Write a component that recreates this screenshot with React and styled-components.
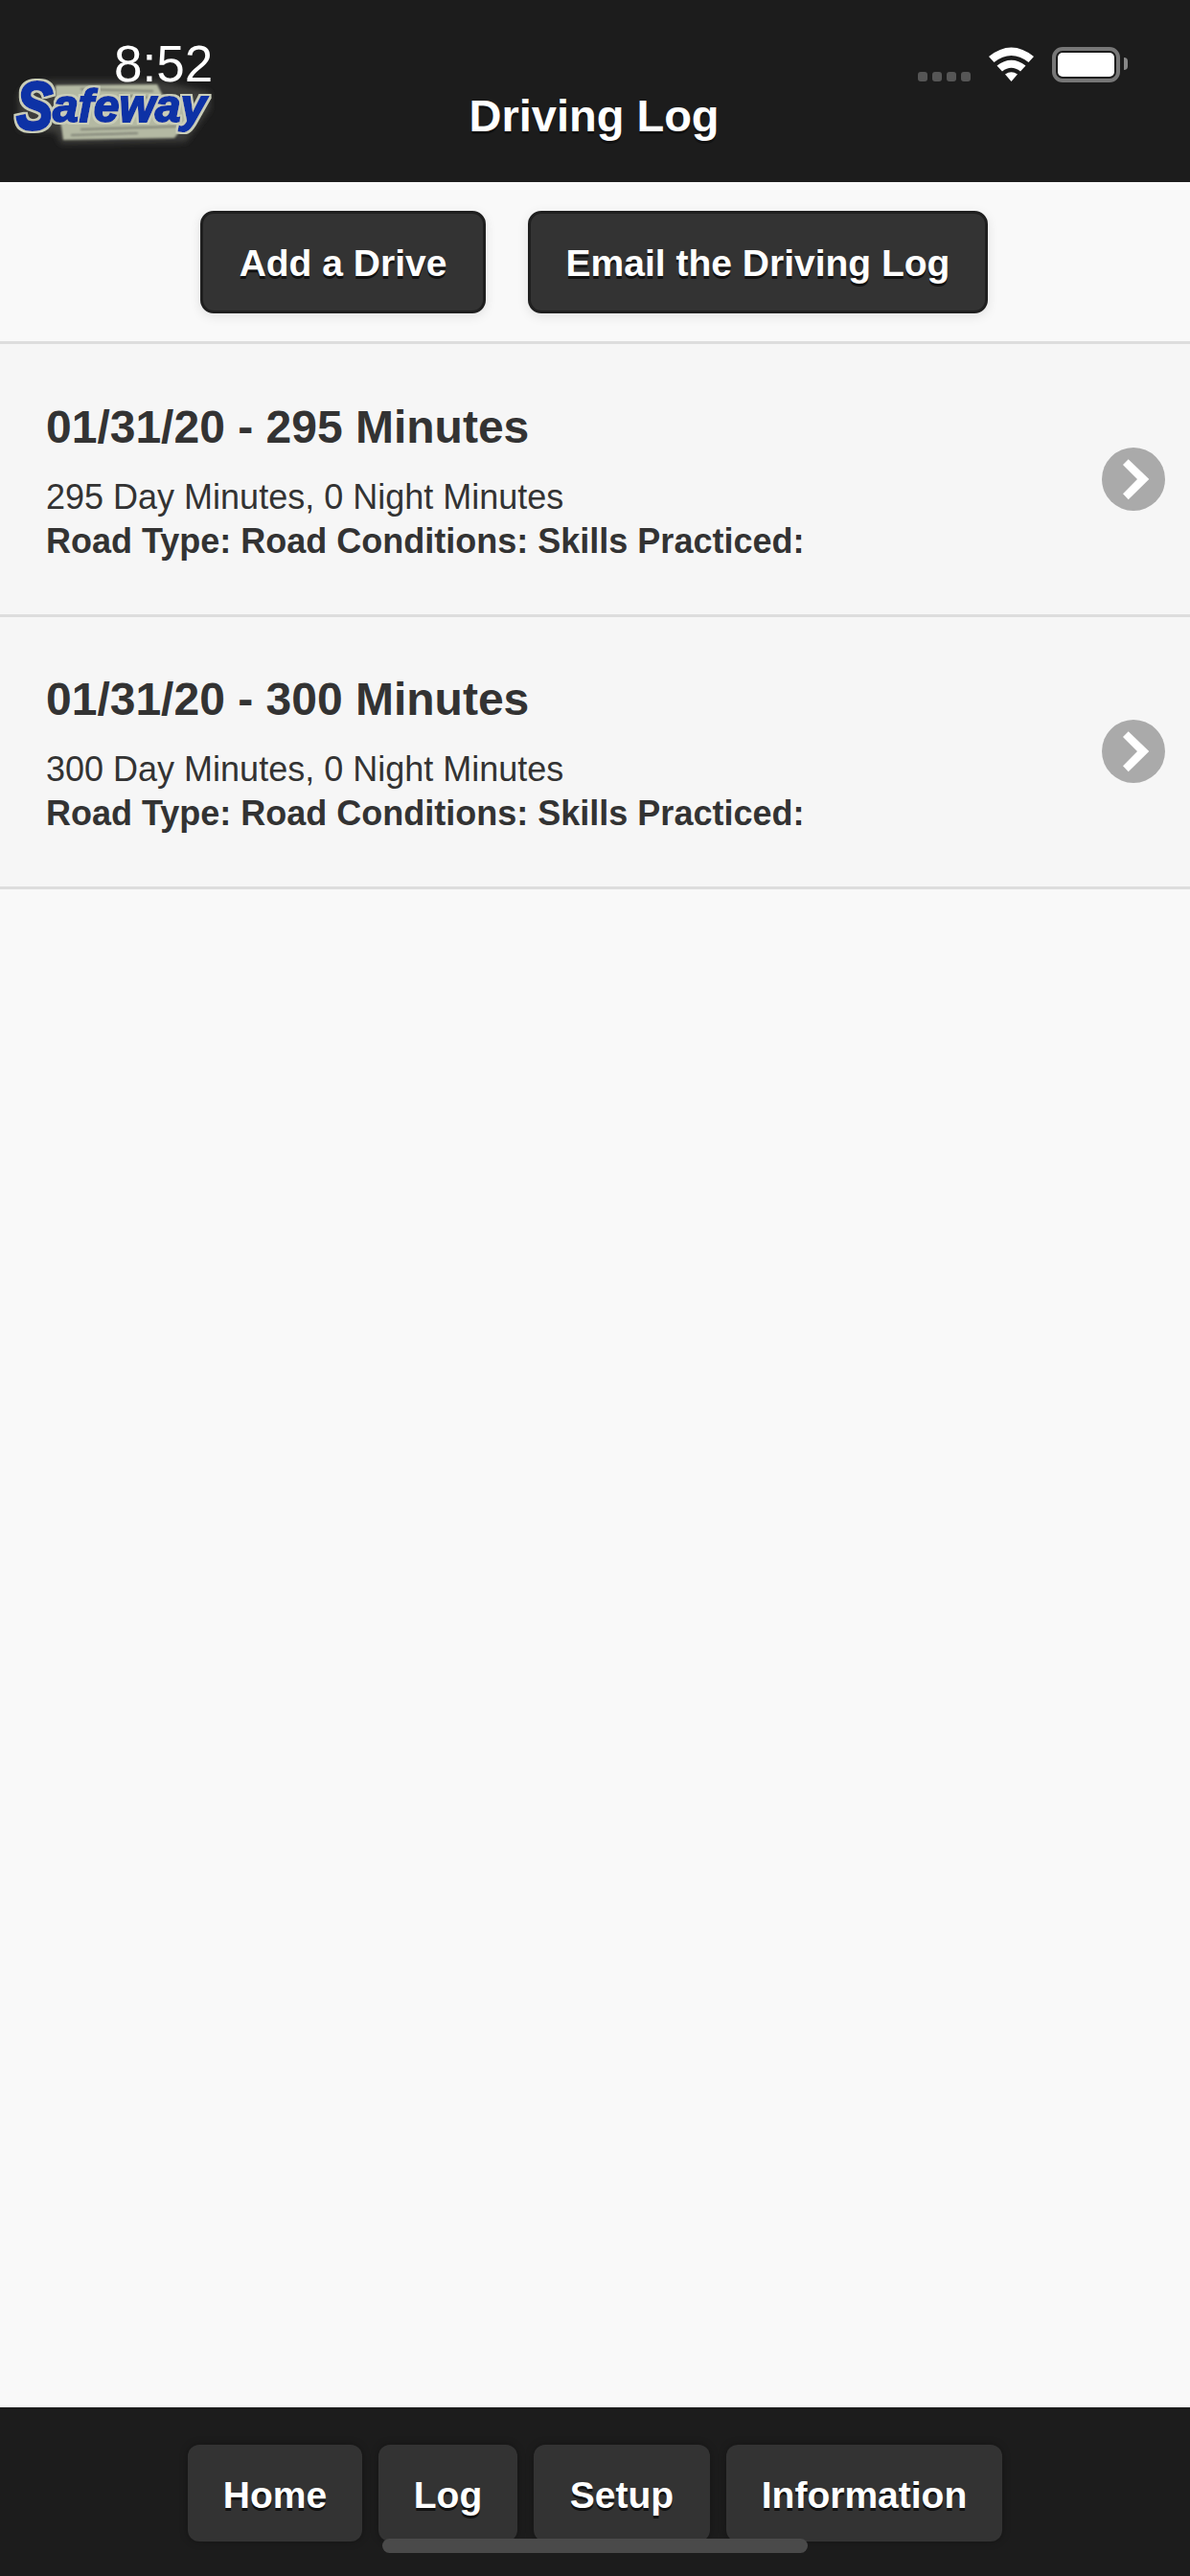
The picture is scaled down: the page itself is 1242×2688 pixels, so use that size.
import React from 'react';
import styled, { createGlobalStyle } from 'styled-components';

const GlobalStyle = createGlobalStyle`
    html, body {
        margin: 0;
        padding: 0;
    }

    body {
        font-family: "Liberation Sans", Arial, sans-serif;
        background: #f9f9f9;
    }
`;

const Page = styled.div`
    position: relative;
    width: 1242px;
    height: 2688px;
    display: flex;
    flex-direction: column;
    overflow: hidden;
`;

const StatusBar = styled.div`
    position: absolute;
    top: 0;
    left: 0;
    right: 0;
    height: 90px;
`;

const Clock = styled.span`
    position: absolute;
    left: 119px;
    top: 38px;
    font-size: 53px;
    line-height: 58px;
    color: #fff;
`;

const StatusIcons = styled.div`
    position: absolute;
    left: 958px;
    top: 49px;
    display: flex;
    align-items: flex-start;
`;

const SignalDots = styled.div`
    display: flex;
    gap: 5px;
    margin-top: 26px;
    margin-right: 19px;
`;

const Dot = styled.i`
    display: block;
    width: 10px;
    height: 10px;
    border-radius: 3px;
    background: #565656;
`;

const Battery = styled.div`
    position: relative;
    box-sizing: border-box;
    width: 71px;
    height: 37px;
    margin-left: 19px;
    padding: 2px;
    border: 4px solid #777;
    border-radius: 11px;

    &::after {
        content: '';
        position: absolute;
        right: -12px;
        top: 7px;
        width: 4px;
        height: 13px;
        border-radius: 0 6px 6px 0;
        background: #888;
    }
`;

const BatteryFill = styled.div`
    height: 100%;
    border-radius: 5px;
    background: #fff;
`;

const Header = styled.header`
    box-sizing: border-box;
    height: 190px;
    flex: none;
    display: grid;
    grid-template-columns: 1fr auto 1fr;
    padding: 0 16px 0 14px;
    background: #1c1c1c;
`;

const LogoSvg = styled.svg`
    display: block;
    margin-top: 76px;
`;

const Title = styled.h1`
    margin: 94px 0 0;
    font-size: 47px;
    line-height: 54px;
    font-weight: 700;
    color: #fff;
    text-shadow: 0 3px 0 #111;
`;

const ActionBar = styled.div`
    box-sizing: border-box;
    height: 166px;
    flex: none;
    display: flex;
    justify-content: center;
    gap: 44px;
    padding: 30px 2px 0 0;
`;

const ActionButton = styled.button`
    box-sizing: border-box;
    width: ${(p) => p.$width}px;
    height: 107px;
    padding: 3px 0 0;
    border: 3px solid #1f1f1f;
    border-radius: 14px;
    background: #333;
    box-shadow: 0 3px 12px rgba(0, 0, 0, 0.1);
    font-family: inherit;
    font-size: 39px;
    font-weight: 700;
    color: #fff;
    text-shadow: 0 3px 0 #111;
`;

const List = styled.ul`
    flex: 1;
    margin: 0;
    padding: 0;
    list-style: none;
    border-top: 3px solid #ddd;
`;

const Row = styled.li`
    box-sizing: border-box;
    height: 284.5px;
    display: flex;
    align-items: center;
    justify-content: space-between;
    padding: 0 26px 0 48px;
    border-bottom: 3px solid #ddd;
    background: #f6f6f6;
    color: #333;
`;

const RowText = styled.div`
    display: flex;
    flex-direction: column;
    padding-top: 7px;
`;

const RowTitle = styled.h2`
    margin: 0 0 23px;
    font-size: 48px;
    line-height: 54px;
    font-weight: 700;
`;

const RowLine = styled.p`
    margin: 0;
    font-size: 36px;
    line-height: 46px;
    font-weight: ${(p) => (p.$bold ? 700 : 400)};
`;

const Arrow = styled.div`
    width: 66px;
    height: 66px;
    border-radius: 50%;
    background: #aaa;
`;

const Footer = styled.footer`
    box-sizing: border-box;
    height: 176px;
    flex: none;
    display: flex;
    justify-content: center;
    align-items: flex-start;
    gap: 17px;
    padding-top: 39px;
    background: #1c1c1c;
`;

const TabButton = styled.button`
    box-sizing: border-box;
    width: ${(p) => p.$width}px;
    height: 101px;
    padding: 5px 0 0;
    border: none;
    border-radius: 12px;
    background: #333;
    box-shadow: 0 0 9px rgba(0, 0, 0, 0.3);
    font-family: inherit;
    font-size: 39px;
    font-weight: 700;
    color: #fff;
    text-shadow: 0 3px 0 #111;
`;

const HomeIndicator = styled.div`
    position: absolute;
    left: 399px;
    top: 2649px;
    width: 444px;
    height: 15px;
    border-radius: 8px;
    background: #4a4a4a;
`;

const drives = [
    { id: 1, total: 295, day: 295, night: 0 },
    { id: 2, total: 300, day: 300, night: 0 },
];

const tabs = [
    { label: 'Home', width: 182 },
    { label: 'Log', width: 145 },
    { label: 'Setup', width: 184 },
    { label: 'Information', width: 288 },
];

const Logo = () => (
    <LogoSvg width="220" height="80" viewBox="0 0 220 80">
        <defs>
            <filter id="soft" x="-10%" y="-30%" width="120%" height="160%">
                <feGaussianBlur stdDeviation="1.2" />
            </filter>
            <filter id="halo" x="-10%" y="-30%" width="120%" height="160%">
                <feGaussianBlur stdDeviation="3" />
            </filter>
            {/* pale rim round the letters, as in the scanned logo */}
            <filter id="rim" x="-10%" y="-30%" width="120%" height="160%">
                <feMorphology in="SourceAlpha" operator="dilate" radius="1.5" result="grown" />
                <feFlood floodColor="#c9cdb8" />
                <feComposite in2="grown" operator="in" result="pale" />
                <feGaussianBlur in="pale" stdDeviation="0.7" result="paleSoft" />
                <feGaussianBlur in="SourceGraphic" stdDeviation="0.5" result="ink" />
                <feMerge>
                    <feMergeNode in="paleSoft" />
                    <feMergeNode in="ink" />
                </feMerge>
            </filter>
        </defs>
        <path d="M5 24 Q10 8 44 8 L150 8 L205 20 L205 38 L180 72 L50 74 L44 62 L6 60 Z" fill="#3c3c3a" filter="url(#halo)" />
        <path
            d="M44 13 L150 12 L156 24 L190 32 L176 58 L168 68 L52 70 L50 56 L44 40 Z"
            fill="#b4b9a3"
            filter="url(#soft)"
        />
        <g stroke="#6f7268" strokeWidth="1.5" fill="none" filter="url(#soft)">
            <path d="M70 17 L146 19" />
            <path d="M110 23 L170 29" />
            <path d="M70 59 L170 56" />
            <path d="M60 65 L130 63" />
        </g>
        <g
            fontFamily="Liberation Sans"
            fontWeight="700"
            fontStyle="italic"
            fill="#0a33a6"
            stroke="#0a33a6"
            filter="url(#rim)"
        >
            <text transform="translate(3 59) scale(0.82 1)" fontSize="70" strokeWidth="3">S</text>
            <text x="41" y="51" fontSize="48" strokeWidth="2">afeway</text>
        </g>
    </LogoSvg>
);

const App = () => (
    <Page>
        <GlobalStyle />
        <Header>
            <Logo />
            <Title>Driving Log</Title>
        </Header>
        <ActionBar>
            <ActionButton $width={298}>Add a Drive</ActionButton>
            <ActionButton $width={480}>Email the Driving Log</ActionButton>
        </ActionBar>
        <List>
            {drives.map((d) => (
                <Row key={d.id}>
                    <RowText>
                        <RowTitle>01/31/20 - {d.total} Minutes</RowTitle>
                        <RowLine>{d.day} Day Minutes, {d.night} Night Minutes</RowLine>
                        <RowLine $bold>Road Type: Road Conditions: Skills Practiced:</RowLine>
                    </RowText>
                    <Arrow>
                        <svg width="66" height="66" viewBox="0 0 66 66">
                            <path d="M27.7 12.3 L49.3 33 L27.7 54.3 L22 48.3 L37 33 L22 18 Z" fill="#fff" />
                        </svg>
                    </Arrow>
                </Row>
            ))}
        </List>
        <Footer>
            {tabs.map((t) => (
                <TabButton key={t.label} $width={t.width}>{t.label}</TabButton>
            ))}
        </Footer>
        <HomeIndicator />
        <StatusBar>
            <Clock>8:52</Clock>
            <StatusIcons>
                <SignalDots>
                    <Dot />
                    <Dot />
                    <Dot />
                    <Dot />
                </SignalDots>
                <svg width="47" height="36" viewBox="0 0 47 36">
                    <path d="M0 10 Q23.5 -9 47 10 L41.5 16 Q23.5 2 5.5 16 Z" fill="#fff" />
                    <path d="M8.5 19.5 Q23.5 8 38.5 19.5 L33 25.5 Q23.5 18 14 25.5 Z" fill="#fff" />
                    <path d="M17 28.5 Q23.5 24 30 28.5 L23.5 36 Z" fill="#fff" />
                </svg>
                <Battery>
                    <BatteryFill />
                </Battery>
            </StatusIcons>
        </StatusBar>
    </Page>
);

export default App;
